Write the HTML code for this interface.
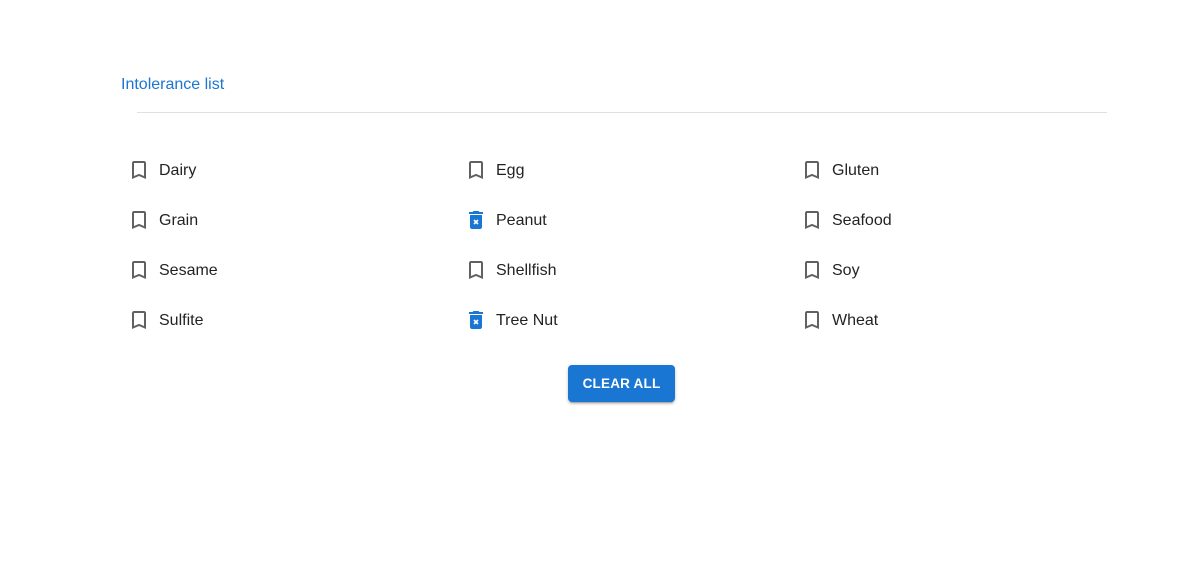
<!DOCTYPE html>
<html><head><style>
body{margin:0;width:1180px;height:579px;background:#fff;font-family:"Liberation Sans",sans-serif;position:relative;overflow:hidden}
.t{position:absolute;left:121px;top:76px;font-size:16px;color:#1976d2}
.hr{position:absolute;left:137px;top:112px;width:970px;height:1px;background:#e0e0e0}
.it{position:absolute;height:20px;font-size:16px;color:rgba(0,0,0,.87);line-height:20px}
.it svg{position:absolute;left:0;top:-2px}
.it span{position:absolute;left:32px;top:1px;white-space:nowrap}
.btn{position:absolute;left:568px;top:365px;width:107px;height:37px;background:#1976d2;border-radius:4px;color:#fff;font-size:13.5px;font-weight:bold;text-align:center;line-height:37px;letter-spacing:.2px;box-shadow:0 3px 1px -2px rgba(0,0,0,.2),0 2px 2px rgba(0,0,0,.14),0 1px 5px rgba(0,0,0,.12)}
</style></head><body>
<div class="t">Intolerance list</div>
<div class="hr"></div>
<svg width="0" height="0" style="position:absolute">
<defs>
<symbol id="bm" viewBox="0 0 24 24"><path fill="#616161" d="M17 3H7c-1.1 0-2 .9-2 2v16l7-3 7 3V5c0-1.1-.9-2-2-2zm0 15l-5-2.18L7 18V5h10v13z"/></symbol>
<symbol id="tr" viewBox="0 0 24 24"><path fill="#1976d2" d="M15.5 4l-1-1h-5l-1 1H5v2h14V4zM6 19c0 1.1.9 2 2 2h8c1.1 0 2-.9 2-2V7H6v12z"/><path stroke="#fff" stroke-width="1.6" d="M10 12l4 4M14 12l-4 4"/></symbol>
</defs></svg>
<div class="it" style="left:127px;top:160px"><svg width="24" height="24"><use href="#bm"/></svg><span>Dairy</span></div>
<div class="it" style="left:464px;top:160px"><svg width="24" height="24"><use href="#bm"/></svg><span>Egg</span></div>
<div class="it" style="left:800px;top:160px"><svg width="24" height="24"><use href="#bm"/></svg><span>Gluten</span></div>
<div class="it" style="left:127px;top:210px"><svg width="24" height="24"><use href="#bm"/></svg><span>Grain</span></div>
<div class="it" style="left:464px;top:210px"><svg width="24" height="24"><use href="#tr"/></svg><span>Peanut</span></div>
<div class="it" style="left:800px;top:210px"><svg width="24" height="24"><use href="#bm"/></svg><span>Seafood</span></div>
<div class="it" style="left:127px;top:260px"><svg width="24" height="24"><use href="#bm"/></svg><span>Sesame</span></div>
<div class="it" style="left:464px;top:260px"><svg width="24" height="24"><use href="#bm"/></svg><span>Shellfish</span></div>
<div class="it" style="left:800px;top:260px"><svg width="24" height="24"><use href="#bm"/></svg><span>Soy</span></div>
<div class="it" style="left:127px;top:310px"><svg width="24" height="24"><use href="#bm"/></svg><span>Sulfite</span></div>
<div class="it" style="left:464px;top:310px"><svg width="24" height="24"><use href="#tr"/></svg><span>Tree Nut</span></div>
<div class="it" style="left:800px;top:310px"><svg width="24" height="24"><use href="#bm"/></svg><span>Wheat</span></div>
<div class="btn">CLEAR ALL</div>
</body></html>
